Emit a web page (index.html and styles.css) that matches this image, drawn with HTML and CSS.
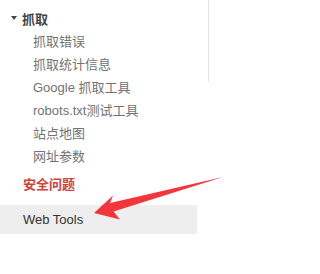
FILE: index.html
```html
<!DOCTYPE html>
<html>
<head>
<meta charset="utf-8">
<link rel="stylesheet" href="styles.css">
</head>
<body>
<div class="page">
  <nav class="sidebar">
    <div class="section-head"><span class="caret"></span><span>抓取</span></div>
    <ul class="items">
      <li>抓取错误</li>
      <li>抓取统计信息</li>
      <li>Google 抓取工具</li>
      <li>robots.txt测试工具</li>
      <li>站点地图</li>
      <li>网址参数</li>
    </ul>
    <div class="security">安全问题</div>
    <div class="webtools">Web Tools</div>
  </nav>
  <div class="rightpane"><div class="divider"></div></div>
  <svg class="arrow" width="317" height="274" viewBox="0 0 317 274">
    <polygon points="94,213 113,195.5 110,203 223,177 113.5,211.5 120,219.5" fill="#f2363b"/>
  </svg>
</div>
</body>
</html>
```
FILE: styles.css
```css
html, body {
  margin: 0;
  padding: 0;
  background: #ffffff;
}
.page {
  position: relative;
  width: 317px;
  height: 274px;
  display: flex;
  font-family: "Liberation Sans", "Noto Sans CJK SC", sans-serif;
  font-size: 13px;
}
.sidebar {
  width: 197px;
  padding-top: 6px;
  display: flex;
  flex-direction: column;
}
.section-head {
  height: 24px;
  display: flex;
  align-items: center;
  padding-left: 11px;
  font-weight: bold;
  color: #444444;
}
.caret {
  width: 0;
  height: 0;
  border-left: 3.5px solid transparent;
  border-right: 3.5px solid transparent;
  border-top: 4px solid #444444;
  margin-right: 5px;
}
.items {
  list-style: none;
  margin: 0;
  padding: 0;
}
.items li {
  height: 23px;
  line-height: 23px;
  padding-left: 33px;
  color: #737373;
  white-space: nowrap;
}
.security {
  margin-top: 5px;
  height: 23px;
  line-height: 23px;
  padding-left: 23px;
  color: #d0413a;
  font-weight: bold;
}
.webtools {
  margin-top: 9px;
  height: 29px;
  line-height: 29px;
  padding-left: 23px;
  color: #333333;
  background: #eeeeee;
}
.rightpane {
  flex: 1;
}
.divider {
  margin-left: 11px;
  width: 1px;
  height: 82px;
  background: #e3e3e3;
}
.arrow {
  position: absolute;
  left: 0;
  top: 0;
}
```
